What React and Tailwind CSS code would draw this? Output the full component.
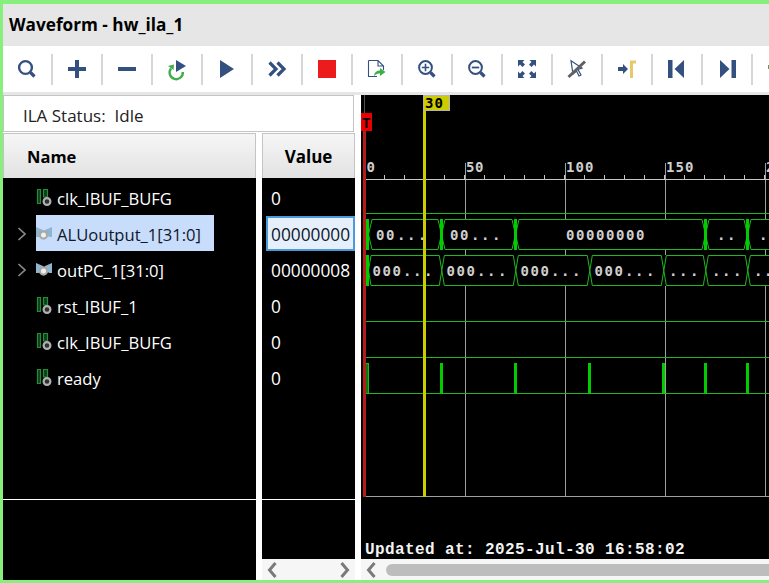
import React from 'react'

const BLUE = '#34507f'
const sans = 'font-["Open_Sans","Noto_Sans",sans-serif]'

const Ico = ({ children }) => (
  <svg width="18" height="18" viewBox="0 0 18 18" fill="none" className="overflow-visible">{children}</svg>
)

const toolbarIcons = [
  // search
  <Ico><circle cx="7.5" cy="7.5" r="6.4" stroke={BLUE} strokeWidth="2.4" /><path d="M12.5 12.5L16.5 16.5" stroke={BLUE} strokeWidth="3.2" /></Ico>,
  // add
  <Ico><path d="M9 0V18M0 9H18" stroke={BLUE} strokeWidth="4" /></Ico>,
  // remove
  <Ico><path d="M0 9H18" stroke={BLUE} strokeWidth="4" /></Ico>,
  // run trigger immediate
  <Ico>
    <path d="M8 0L18 6L8 12Z" fill={BLUE} />
    <path d="M3 8.5A6.6 6.6 0 1 0 14.8 12" stroke="#3fae49" strokeWidth="2.4" />
    <path d="M0 6L6 4.5L5.5 10Z" fill="#3fae49" />
  </Ico>,
  // play
  <Ico><path d="M2 0L16 9L2 18Z" fill={BLUE} /></Ico>,
  // double chevron
  <Ico><path d="M1.5 2.5L8 9L1.5 15.5M9.5 2.5L16 9L9.5 15.5" stroke={BLUE} strokeWidth="3.2" /></Ico>,
  // stop
  <Ico><rect width="18" height="18" fill="#ed1c1c" /></Ico>,
  // export
  <Ico>
    <path d="M.5 0.5H10L15.5 6V10M10 .5V6H15.5M9 16.5H.5V.5" stroke={BLUE} strokeWidth="1.1" />
    <path d="M6 16C6.5 12 9 10.5 12 10.5V8L17.5 12L12 16V13.5C10 13.5 8 14 6 16Z" fill="#3fae49" />
  </Ico>,
  // zoom in
  <Ico>
    <circle cx="7.5" cy="7.5" r="6.4" stroke={BLUE} strokeWidth="2" />
    <path d="M7.5 3.8V11.2M3.8 7.5H11.2" stroke={BLUE} strokeWidth="1.6" />
    <path d="M12.5 12.5L16.5 16.5" stroke={BLUE} strokeWidth="3.2" />
  </Ico>,
  // zoom out
  <Ico>
    <circle cx="7.5" cy="7.5" r="6.4" stroke={BLUE} strokeWidth="2" />
    <path d="M3.8 7.5H11.2" stroke={BLUE} strokeWidth="1.8" />
    <path d="M12.5 12.5L16.5 16.5" stroke={BLUE} strokeWidth="3.2" />
  </Ico>,
  // zoom fit
  <Ico>
    <path d="M0 0H6.5L4.5 2L7 4.5L4.5 7L2 4.5L0 6.5ZM18 0H11.5L13.5 2L11 4.5L13.5 7L16 4.5L18 6.5ZM0 18H6.5L4.5 16L7 13.5L4.5 11L2 13.5L0 11.5ZM18 18H11.5L13.5 16L11 13.5L13.5 11L16 13.5L18 11.5Z" fill={BLUE} />
  </Ico>,
  // cursor, crossed out
  <Ico>
    <path d="M3 0.8L14 8L10 9.5L13 15L11 16L8.5 11L5 14Z" stroke={BLUE} strokeWidth="1.2" fill="#ffffff" />
    <path d="M0.5 17L17 1.5" stroke="#606060" strokeWidth="3" />
  </Ico>,
  // snap to transition
  <Ico>
    <path d="M0 7H5V4L10 9L5 14V11H0Z" fill={BLUE} />
    <path d="M12 18V0.5H18V3.5H15V18Z" fill="#e6c96a" />
  </Ico>,
  // previous
  <Ico><rect x="0" y="0" width="4.5" height="18" fill={BLUE} /><path d="M16 0V18L6.5 9Z" fill={BLUE} /></Ico>,
  // next
  <Ico><rect x="13.5" y="0" width="4.5" height="18" fill={BLUE} /><path d="M2 0V18L11.5 9Z" fill={BLUE} /></Ico>,
  // next one is cut off by the window
  <Ico><rect x="0" y="5" width="3" height="4" fill="#3fae49" /></Ico>,
]

const BitIcon = () => (
  <svg width="16" height="18" viewBox="0 0 16 18" fill="none" className="shrink-0 mt-[2px]">
    <path d="M1.5 .5H4.5V14.5H1.5ZM7.5 .5H11.5V8H7.5Z" stroke="#1f8f3a" strokeWidth="1.2" fill="#123a1c" />
    <circle cx="11" cy="12.5" r="3.4" stroke="#b0b0b0" strokeWidth="2.2" fill="#303030" />
  </svg>
)

const BusIcon = () => (
  <svg width="16" height="18" viewBox="0 0 16 18" fill="none" className="shrink-0 mt-[2px]">
    <path d="M0 2L7 5V8L3 12H0ZM16 2L9 5V8L13 12H16Z" fill="#8fb6cf" />
    <circle cx="7.5" cy="10" r="3.6" stroke="#a8a8a8" strokeWidth="2.2" fill="#f0f0f0" />
  </svg>
)

const ExpandArrow = () => (
  <svg width="10" height="14" viewBox="0 0 10 14" fill="none" className="mt-[2px]">
    <path d="M1.5 1L8 7L1.5 13" stroke="#8a8a8a" strokeWidth="1.7" />
  </svg>
)

const ScrollArrow = ({ right }) => (
  <svg width="11" height="16" viewBox="0 0 11 16" fill="none" className="shrink-0">
    <path d={right ? 'M2.5 1L8.5 8L2.5 15' : 'M8.5 1L2.5 8L8.5 15'} stroke="#7a7a7a" strokeWidth="3" />
  </svg>
)

const signals = [
  { name: 'clk_IBUF_BUFG', value: '0' },
  { name: 'ALUoutput_1[31:0]', value: '00000000', bus: true, selected: true },
  { name: 'outPC_1[31:0]', value: '00000008', bus: true },
  { name: 'rst_IBUF_1', value: '0' },
  { name: 'clk_IBUF_BUFG', value: '0' },
  { name: 'ready', value: '0' },
]

const GREEN = '#1fb81f'
const THICK = '#00cc00'

// one hexagon per bus value, between two crossover points
function busPath(top, bottom, centers, d) {
  const mid = (top + bottom) / 2
  let p = ''
  for (let i = 0; i < centers.length - 1; i++) {
    const a = centers[i]
    const b = centers[i + 1]
    p += `M${a} ${mid}L${a + d} ${top}H${b - d}L${b} ${mid}L${b - d} ${bottom}H${a + d}Z`
  }
  return p
}

const row2 = [368.5, 441.5, 515.5, 705.5, 747.5, 830]
const row3 = [368.5, 441.8, 515.8, 589.8, 663.8, 705.8, 747.8, 830]
const pulses = [440, 514, 588, 662, 704, 746]
const ticks = Array.from({ length: 20 }, (_, i) => 385 + i * 20)

const Digits = ({ xs, y, text }) => (
  <text x={xs.join(' ')} y={y} fill="#cfcfcf" fontSize="14" fontWeight="700" fontFamily="'DejaVu Sans Mono', monospace">{text}</text>
)

function WaveCanvas() {
  return (
    <svg className="block w-full flex-1 bg-black" viewBox="361 95 408 464" width="408" height="464">
      {/* grid */}
      <g shapeRendering="crispEdges">
        {[465, 565, 665, 765].map(x => <path key={x} d={`M${x + 0.5} 163V496`} stroke="#a0a0a0" />)}
        <path d="M366 179.5H769" stroke="#c8c8c8" />
        {ticks.map(x => <path key={x} d={`M${x - 0.5} 175V179`} stroke="#c8c8c8" />)}
        <path d="M365 496.5H769" stroke="#a0a0a0" />
        <rect x="367" y="219" width="402" height="31" fill="#000" />
        <rect x="367" y="255" width="402" height="31" fill="#000" />
        {[213.5, 321.5, 357.5, 393.5].map(y => <path key={y} d={`M366 ${y}H769`} stroke={GREEN} />)}
      </g>

      {/* ruler labels */}
      <g fill="#cfcfcf" fontSize="14" fontWeight="700" fontFamily="'DejaVu Sans Mono', monospace">
        <text x="366.5" y="172">0</text>
        <text x="466 475" y="172">50</text>
        <text x="566 575.5 585" y="172">100</text>
        <text x="666 675.5 685" y="172">150</text>
        <text x="766" y="172">2</text>
      </g>

      {/* buses */}
      <path d={busPath(219.5, 249.5, row2, 3.5)} stroke={GREEN} fill="none" />
      <path d={busPath(255.5, 285.5, row3, 2.5)} stroke={GREEN} fill="none" />
      <g shapeRendering="crispEdges">
        <rect x="366" y="219" width="3" height="31" fill={THICK} />
        <rect x="366" y="255" width="3" height="31" fill={THICK} />
        {[440, 514, 704, 746].map(x => <rect key={x} x={x} y="219" width="3" height="31" fill={THICK} />)}
      </g>

      <Digits xs={[376, 386, 397, 407, 418]} y="240" text="00..." />
      <Digits xs={[450, 460, 471, 481, 492]} y="240" text="00..." />
      <Digits xs={[566, 576, 586, 596, 606, 616, 626, 636]} y="240" text="00000000" />
      <Digits xs={[717, 727]} y="240" text=".." />
      <Digits xs={[759]} y="240" text="." />
      <Digits xs={[372.5, 382.5, 392.5, 403, 413, 424]} y="276" text="000..." />
      <Digits xs={[446.5, 456.5, 466.5, 477, 487, 498]} y="276" text="000..." />
      <Digits xs={[520.5, 530.5, 540.5, 551, 561, 572]} y="276" text="000..." />
      <Digits xs={[594.5, 604.5, 614.5, 625, 635, 646]} y="276" text="000..." />
      <Digits xs={[669, 679, 690]} y="276" text="..." />
      <Digits xs={[712, 722, 733]} y="276" text="..." />
      <Digits xs={[754, 764]} y="276" text=".." />

      {/* ready pulses */}
      <g shapeRendering="crispEdges">
        <rect x="366" y="363" width="2" height="30" fill="#0a7a0a" />
        <path d="M366 363.5H368.5M368.5 363V393" stroke={GREEN} fill="none" />
        {pulses.map(x => <rect key={x} x={x} y="363" width="3" height="30" fill={THICK} />)}
      </g>

      {/* markers */}
      <g shapeRendering="crispEdges">
        <path d="M364.5 95V113" stroke="#505050" />
        <rect x="363" y="131" width="3" height="366" fill="#b41c1c" />
        <rect x="361" y="113" width="11" height="18" fill="#e80000" />
        <rect x="423" y="110" width="3" height="387" fill="#cccc00" />
        <rect x="423.5" y="95.5" width="26" height="15" fill="#cccc00" stroke="#b4b4b4" />
      </g>
      <text x="362" y="128" fill="#000" fontSize="14" fontWeight="700" fontFamily="'Liberation Mono', monospace">T</text>
      <text x="425 434.5" y="108" fill="#000" fontSize="14" fontWeight="700" fontFamily="'DejaVu Sans Mono', monospace">30</text>

      <text x="365" y="554" fill="#f2f2f2" fontSize="16" fontWeight="700" letterSpacing="0.4" fontFamily="'Liberation Mono', monospace">Updated at: 2025-Jul-30 16:58:02</text>
    </svg>
  )
}

export default function App() {
  return (
    <div className={`w-[769px] h-[583px] overflow-hidden flex flex-col border-t-4 border-b-[3px] border-l-[3px] border-[#86ef7d] bg-white ${sans}`}>
      <div className="h-[42px] shrink-0 bg-[#e6e6e6] flex items-center pl-[6px] text-[17.2px] font-bold text-black">Waveform - hw_ila_1</div>

      <div className="h-[46px] shrink-0 flex items-center bg-white">
        {toolbarIcons.map((icon, i) => (
          <React.Fragment key={i}>
            <div className="w-12 shrink-0 flex justify-center">{icon}</div>
            <div className="w-[2px] h-[31px] shrink-0 bg-[#d6d6d6]" />
          </React.Fragment>
        ))}
      </div>
      <div className="h-[3px] shrink-0 bg-[#e6e6e6]" />

      <div className="flex-1 flex min-h-0">
        <div className="w-[358px] shrink-0 flex flex-col">
          <div className="w-[351px] h-[37px] shrink-0 border border-[#c4c4c4] flex items-center pl-[19px] pt-[4px] text-[17px] text-[#222]">ILA Status:&nbsp; Idle</div>
          <div className="flex flex-1 min-h-0 mt-px">
            {/* name column */}
            <div className="w-[253px] flex flex-col">
              <div className="h-[45px] shrink-0 border border-b-0 border-[#c4c4c4] bg-gradient-to-b from-[#f6f6f6] to-[#e2e2e2] flex items-center pl-[23px] pt-[2px] text-[16.5px] font-bold text-black">Name</div>
              <div className="h-[322px] shrink-0 bg-black border-b border-white pt-px">
                {signals.map((s, i) => (
                  <div key={i} className="h-9 flex items-center">
                    <div className="w-[33px] flex justify-start pl-[14px] shrink-0">
                      {s.bus && <ExpandArrow />}
                    </div>
                    <div className={`flex items-center gap-[5px] h-9 ${s.selected ? 'w-[178px] bg-[#c8dcfc] text-[#101828]' : 'text-white'}`}>
                      {s.bus ? <BusIcon /> : <BitIcon />}
                      <span className="text-[16.6px] pt-[4px] whitespace-nowrap">{s.name}</span>
                    </div>
                  </div>
                ))}
              </div>
              <div className="flex-1 bg-black" />
            </div>

            {/* value column */}
            <div className="w-[93px] ml-[6px] flex flex-col">
              <div className="h-[45px] shrink-0 border border-b-0 border-[#c4c4c4] bg-gradient-to-b from-[#f6f6f6] to-[#e2e2e2] flex items-center justify-center pt-[2px] text-[17px] font-bold text-black">Value</div>
              <div className="h-[322px] shrink-0 bg-black border-b border-white pt-px">
                {signals.map((s, i) => (
                  <div key={i} className="h-9 flex items-center">
                    {s.selected
                      ? <div className="ml-1 w-[89px] h-[35px] mt-px border-2 border-[#4d9bd6] bg-[#e6f0fc] text-[#101828] flex items-center pl-[3px] pt-[3px] text-[17.3px] whitespace-nowrap overflow-hidden">{s.value}</div>
                      : <span className="pl-[9px] pt-[4px] text-[17.3px] text-white">{s.value}</span>}
                  </div>
                ))}
              </div>
              <div className="flex-1 bg-black" />
              <div className="h-[21px] shrink-0 bg-[#f6f6f6] flex items-center justify-between px-[5px]">
                <ScrollArrow />
                <ScrollArrow right />
              </div>
            </div>
          </div>
        </div>

        {/* waveform */}
        <div className="flex-1 min-w-0 flex flex-col">
          <WaveCanvas />
          <div className="h-[21px] shrink-0 bg-[#f6f6f6] flex items-center pl-[5px]">
            <ScrollArrow />
            <div className="ml-[9px] flex-1 h-3 rounded-l-md bg-[#bdbdbd]" />
          </div>
        </div>
      </div>
    </div>
  )
}
